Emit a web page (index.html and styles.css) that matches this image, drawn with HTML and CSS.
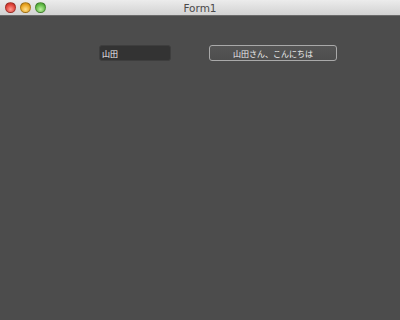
FILE: index.html
```html
<!DOCTYPE html>
<html lang="ja">
<head>
    <meta charset="UTF-8">
    <meta name="viewport" content="width=device-width, initial-scale=1.0">
    <title>Form1</title>
    <link rel="stylesheet" href="styles.css">
</head>
<body>
    <div class="window">
        <div class="titlebar">
            <div class="lights">
                <span class="light red"></span>
                <span class="light yellow"></span>
                <span class="light green"></span>
            </div>
            <div class="title">Form1</div>
            <div></div>
        </div>
        <div class="content">
            <input type="text" class="name-field" value="山田">
            <button class="greet-button">山田さん、こんにちは</button>
        </div>
    </div>
</body>
</html>
```

FILE: styles.css
```css
body {
    margin: 0;
    padding: 0;
    font-family: "Noto Sans CJK JP", "Noto Sans", sans-serif;
    background-color: #4c4c4c;
}
.window {
    width: 400px;
    height: 320px;
    display: flex;
    flex-direction: column;
    background-color: #4c4c4c;
}
.titlebar {
    height: 15px;
    display: grid;
    grid-template-columns: 1fr auto 1fr;
    align-items: center;
    background: linear-gradient(#ececec, #d2d2d2);
    border-bottom: 1px solid #6a6a6a;
}
.lights {
    display: flex;
    gap: 4px;
    padding-left: 4.5px;
}
.light {
    width: 11px;
    height: 11px;
    border-radius: 50%;
    box-sizing: border-box;
    border: 1px solid rgba(0, 0, 0, 0.25);
}
.red {
    background: radial-gradient(circle at 50% 70%, #ff9b91, #e0443a 60%, #b12b22);
}
.yellow {
    background: radial-gradient(circle at 50% 70%, #ffe08a, #e9a421 60%, #b67b12);
}
.green {
    background: radial-gradient(circle at 50% 70%, #bdf0a0, #62bb46 60%, #3e8a2a);
}
.title {
    font-family: "DejaVu Sans", sans-serif;
    font-size: 10.5px;
    color: #4a4a4a;
}
.content {
    display: flex;
    align-items: flex-start;
    padding-top: 29px;
    padding-left: 99px;
    gap: 38px;
}
.name-field {
    width: 72px;
    height: 16px;
    box-sizing: border-box;
    margin: 0;
    padding: 0 2px;
    font-family: inherit;
    font-size: 8px;
    color: #f4f4f4;
    background-color: #333333;
    border: 1px solid #3e3e3e;
    border-radius: 3px;
    outline: none;
}
.greet-button {
    width: 128px;
    height: 16px;
    box-sizing: border-box;
    margin: 0;
    padding: 0;
    font-family: inherit;
    font-size: 8px;
    color: #ececec;
    background: linear-gradient(#555555, #4e4e4e);
    border: 1px solid #a9a9a9;
    border-radius: 3px;
}
```
